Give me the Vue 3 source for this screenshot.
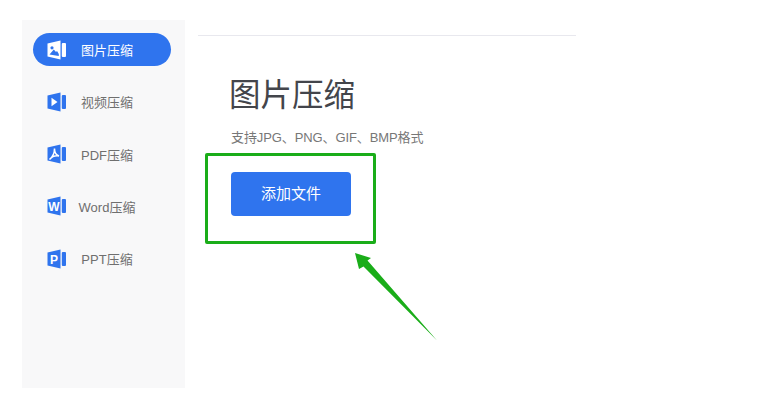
<template>
  <div class="page">
    <aside class="sidebar">
      <div
        v-for="item in items"
        :key="item.label"
        class="nav-item"
        :class="{ active: item.active }"
      >
        <svg class="nav-icon" width="20" height="20" viewBox="0 0 20 20">
          <path :fill="item.active ? '#fff' : '#2f74ee'" d="M0.500 3.500 13.500 0.500v19L0.500 16.500z" />
          <rect :fill="item.active ? '#fff' : '#2f74ee'" x="14.800" y="3" width="4.200" height="14" rx="1" />
          <path v-if="item.glyph === 'image'" fill="#2f74ee" d="M2.500 14.500 6.800 9.500l2.200 2.400 1-1 1.800 3v2zM3.400 7.800a1.600 1.600 0 1 0 3.200 0a1.600 1.600 0 1 0-3.200 0z" />
          <path v-else-if="item.glyph === 'video'" fill="#fff" d="M4.500 5.800 10.500 10l-6 4.200z" />
          <path v-else-if="item.glyph === 'pdf'" fill="none" stroke="#fff" stroke-width="1.500" d="M2.500 15.500c2.500-2 5-6 5-11c0 3.500 1.500 6.500 4.500 7.500c-3-.5-6.500 0-9.500 3.500z" />
          <text v-else class="icon-letter" x="7" y="14.500" text-anchor="middle">{{ item.glyph }}</text>
        </svg>
        <span class="nav-label">{{ item.label }}</span>
      </div>
    </aside>

    <main class="content">
      <div class="divider"></div>
      <h1 class="title">图片压缩</h1>
      <p class="subtitle">支持JPG、PNG、GIF、BMP格式</p>
      <div class="highlight">
        <button class="add-btn">添加文件</button>
      </div>
    </main>

    <svg class="arrow" width="90" height="95" viewBox="0 0 90 95">
      <path fill="#1aad19" d="M1 0 17 5 13.500 7.500 83 87.500 9.500 13.500 5 16z" />
    </svg>
  </div>
</template>

<script setup>
const items = [
  { label: '图片压缩', glyph: 'image', active: true },
  { label: '视频压缩', glyph: 'video' },
  { label: 'PDF压缩', glyph: 'pdf' },
  { label: 'Word压缩', glyph: 'W' },
  { label: 'PPT压缩', glyph: 'P' }
]
</script>

<style>
html,
body {
  background: #fff;
}
</style>

<style scoped>
.page {
  position: relative;
  display: flex;
  width: 760px;
  height: 420px;
  padding: 20px 0 0 22px;
  box-sizing: border-box;
  overflow: hidden;
  background: #fff;
  font-family: "Liberation Sans", "Noto Sans CJK SC", sans-serif;
}

.sidebar {
  display: flex;
  flex-direction: column;
  gap: 19.300px;
  width: 163px;
  height: 368px;
  padding: 13px 14px 0 11px;
  box-sizing: border-box;
  background: #f8f8f9;
}

.nav-item {
  display: flex;
  align-items: center;
  height: 33px;
  border-radius: 17px;
  color: #6f6f6f;
  font-size: 13px;
}

.nav-item.active {
  background: #2f74ee;
  color: #fff;
}

.nav-icon {
  flex: none;
  margin-left: 14px;
}

.nav-label {
  flex: 1;
  padding-right: 24px;
  text-align: center;
}

.icon-letter {
  fill: #fff;
  font-size: 12px;
  font-weight: bold;
}

.content {
  flex: none;
  width: 378px;
  margin-left: 13px;
}

.divider {
  height: 1px;
  margin-top: 15px;
  background: #e8e8ee;
}

.title {
  margin: 39px 0 0 31px;
  color: #43454b;
  font-size: 31.500px;
  font-weight: 400;
  line-height: 40px;
}

.subtitle {
  margin: 14px 0 0 33px;
  color: #777;
  font-size: 13px;
  letter-spacing: -0.100px;
  line-height: 18px;
}

.highlight {
  width: 171px;
  height: 91px;
  margin: 6px 0 0 7px;
  padding: 16px 0 0 23px;
  box-sizing: border-box;
  border: 3px solid #1aad19;
  border-radius: 2px;
}

.add-btn {
  display: block;
  width: 120px;
  height: 44px;
  padding-bottom: 4px;
  border: none;
  border-radius: 4px;
  background: #2f74ee;
  color: #fff;
  font-family: inherit;
  font-size: 15px;
}

.arrow {
  position: absolute;
  left: 354px;
  top: 253px;
}
</style>
